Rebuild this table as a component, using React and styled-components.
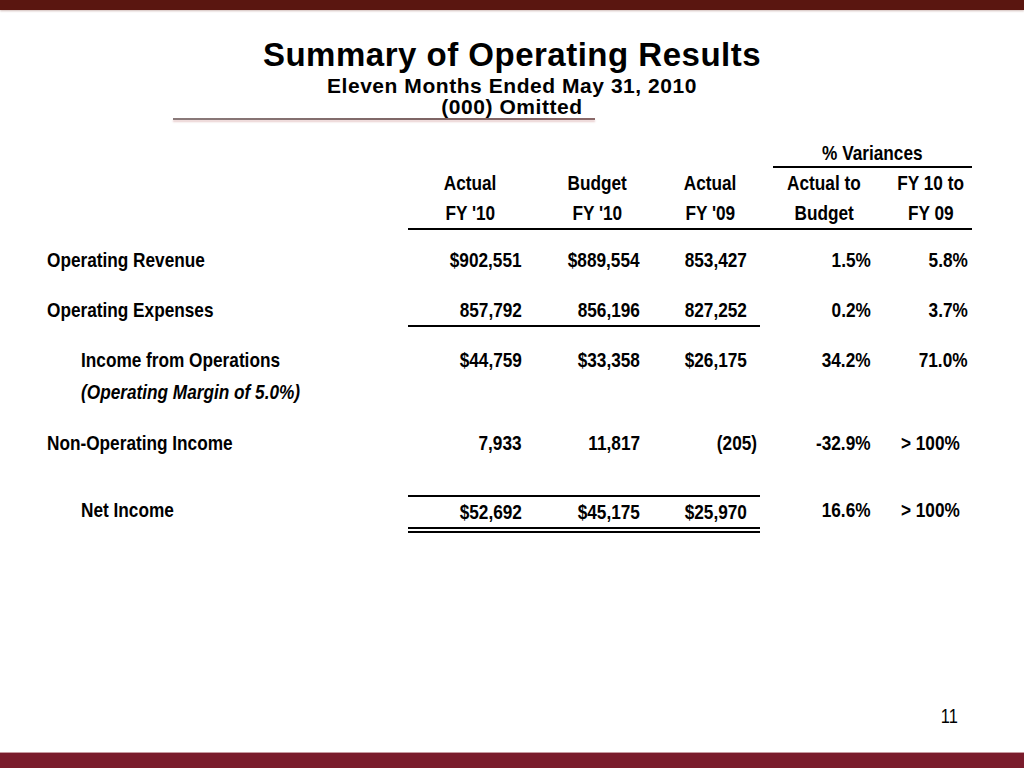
import React from 'react';
import styled, { createGlobalStyle } from 'styled-components';

const GlobalStyle = createGlobalStyle`
  html, body {
    margin: 0;
    padding: 0;
    background: #ffffff;
  }
  body {
    font-family: "Liberation Sans", Arial, sans-serif;
    color: #000000;
  }
`;

// no narrow face installed: regular Liberation Sans squeezed to Arial Narrow widths
const Narrow = styled.span`
  display: inline-block;
  transform: scaleX(0.82);
  transform-origin: ${(p) => p.$origin || 'center'};
`;

const Slide = styled.div`
  width: 1024px;
  height: 768px;
  display: flex;
  flex-direction: column;
  background: #ffffff;
  overflow: hidden;
`;

const TopBar = styled.div`
  height: 10px;
  flex-shrink: 0;
  background: #5a1610;
  box-shadow: 0 1px 2px rgba(120, 60, 50, 0.35);
`;

const Header = styled.header`
  display: flex;
  flex-direction: column;
  padding-top: 28px;
`;

const Title = styled.h1`
  margin: 0;
  text-align: center;
  font-family: "Liberation Sans", Arial, sans-serif;
  font-weight: bold;
  font-size: 33px;
  line-height: 33px;
  letter-spacing: 0.5px;
`;

const Subtitle = styled.h2`
  margin: 4px 0 0;
  text-align: center;
  font-family: "Liberation Sans", Arial, sans-serif;
  font-weight: bold;
  font-size: 21px;
  line-height: 21px;
  letter-spacing: 0.55px;
`;

const Divider = styled.div`
  margin: 1px 0 0 173px;
  width: 422px;
  height: 2px;
  background: linear-gradient(to right, #8a7a7a, #7d6464 60%, #8a6868);
  box-shadow: 0 2px 2px rgba(190, 110, 110, 0.35);
`;

const Table = styled.section`
  display: flex;
  flex-direction: column;
  margin-top: 19px;
  font-family: "Liberation Sans", Arial, sans-serif;
  font-weight: bold;
  font-size: 21px;
`;

const Row = styled.div`
  display: grid;
  grid-template-columns: 47px 361px 124px 118px 110px 13px 102px 97px;
  margin-top: ${(p) => p.$gap || 0}px;
  line-height: ${(p) => p.$lh || 30}px;
`;

const Label = styled.div`
  grid-column: 2;
  padding-left: ${(p) => (p.$indent ? 34 : 0)}px;
  font-style: ${(p) => (p.$italic ? 'italic' : 'normal')};
  white-space: nowrap;
`;

const Head = styled.div`
  grid-column: ${(p) => p.$col};
  text-align: center;
  padding-left: ${(p) => p.$shift || 0}px;
  white-space: nowrap;
  border-bottom: ${(p) => (p.$rule ? '2px solid #000' : 'none')};
`;

const Num = styled.div`
  grid-column: ${(p) => p.$col};
  text-align: right;
  white-space: nowrap;
  padding-right: ${(p) => p.$pad ?? 0}px;
  border-top: ${(p) => (p.$over ? '2px solid #000' : 'none')};
  border-bottom: ${(p) =>
    p.$double ? '6px double #000' : p.$under ? '2px solid #000' : 'none'};
`;

const Spacer = styled.div`
  flex: 1;
`;

const PageNumber = styled.div`
  align-self: flex-end;
  margin-right: 66px;
  margin-bottom: 26px;
  font-family: "Liberation Sans", Arial, sans-serif;
  font-size: 20px;
  line-height: 20px;
`;

const BottomBar = styled.div`
  height: 15px;
  flex-shrink: 0;
  background: #7a1c2c;
  border-top: 1px solid #c89aa0;
`;

const money = [
  { label: 'Operating Revenue', vals: ['$902,551', '$889,554', '853,427'], pct: ['1.5%', '5.8%'], gap: 15 },
  { label: 'Operating Expenses', vals: ['857,792', '856,196', '827,252'], pct: ['0.2%', '3.7%'], gap: 20, under: true },
];

const L = ({ children }) => <Narrow $origin="left">{children}</Narrow>;
const R = ({ children }) => <Narrow $origin="right">{children}</Narrow>;
const C = ({ children }) => <Narrow>{children}</Narrow>;

function App() {
  return (
    <Slide>
      <GlobalStyle />
      <TopBar />
      <Header>
        <Title>Summary of Operating Results</Title>
        <Subtitle>
          Eleven Months Ended May 31, 2010
          <br />
          (000) Omitted
        </Subtitle>
        <Divider />
      </Header>

      <Table>
        <Row $lh={27}>
          <Head $col="7 / 9" $rule><C>% Variances</C></Head>
        </Row>
        <Row>
          <Head $col={3}><C>Actual</C></Head>
          <Head $col={4} $shift={12}><C>Budget</C></Head>
          <Head $col={5} $shift={10}><C>Actual</C></Head>
          <Head $col={7}><C>Actual to</C></Head>
          <Head $col={8} $shift={14}><C>FY 10 to</C></Head>
        </Row>
        <Row>
          <Head $col={3} $rule><C>FY '10</C></Head>
          <Head $col={4} $rule $shift={12}><C>FY '10</C></Head>
          <Head $col={5} $rule $shift={10}><C>FY '09</C></Head>
          <Head $col={6} $rule />
          <Head $col={7} $rule><C>Budget</C></Head>
          <Head $col={8} $rule $shift={14}><C>FY 09</C></Head>
        </Row>

        {money.map((r) => (
          <Row key={r.label} $gap={r.gap}>
            <Label><L>{r.label}</L></Label>
            <Num $col={3} $pad={10} $under={r.under}><R>{r.vals[0]}</R></Num>
            <Num $col={4} $pad={10} $under={r.under}><R>{r.vals[1]}</R></Num>
            <Num $col={5} $pad={13} $under={r.under}><R>{r.vals[2]}</R></Num>
            <Num $col={7} $pad={4}><R>{r.pct[0]}</R></Num>
            <Num $col={8} $pad={4}><R>{r.pct[1]}</R></Num>
          </Row>
        ))}

        <Row $gap={18}>
          <Label $indent><L>Income from Operations</L></Label>
          <Num $col={3} $pad={10}><R>$44,759</R></Num>
          <Num $col={4} $pad={10}><R>$33,358</R></Num>
          <Num $col={5} $pad={13}><R>$26,175</R></Num>
          <Num $col={7} $pad={4}><R>34.2%</R></Num>
          <Num $col={8} $pad={4}><R>71.0%</R></Num>
        </Row>
        <Row $gap={2}>
          <Label $indent $italic><L>(Operating Margin of 5.0%)</L></Label>
        </Row>

        <Row $gap={21}>
          <Label><L>Non-Operating Income</L></Label>
          <Num $col={3} $pad={10}><R>7,933</R></Num>
          <Num $col={4} $pad={10}><R>11,817</R></Num>
          <Num $col={5} $pad={3}><R>(205)</R></Num>
          <Num $col={7} $pad={4}><R>-32.9%</R></Num>
          <Num $col={8} $pad={12}><R>&gt; 100%</R></Num>
        </Row>

        <Row $gap={37}>
          <Label $indent><L>Net Income</L></Label>
          <Num $col={3} $pad={10} $over $double><R>$52,692</R></Num>
          <Num $col={4} $pad={10} $over $double><R>$45,175</R></Num>
          <Num $col={5} $pad={13} $over $double><R>$25,970</R></Num>
          <Num $col={7} $pad={4}><R>16.6%</R></Num>
          <Num $col={8} $pad={12}><R>&gt; 100%</R></Num>
        </Row>
      </Table>

      <Spacer />
      <PageNumber><R>11</R></PageNumber>
      <BottomBar />
    </Slide>
  );
}

export default App;
